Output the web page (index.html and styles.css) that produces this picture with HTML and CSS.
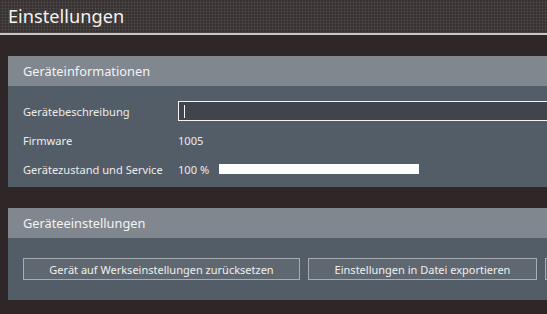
FILE: index.html
```html
<!DOCTYPE html>
<html lang="de">
<head>
    <meta charset="UTF-8">
    <title>Einstellungen</title>
    <link rel="stylesheet" href="styles.css">
</head>
<body>

    <div class="topbar">
        <h1 class="topbar-title">Einstellungen</h1>
    </div>

    <div class="content">
        <div class="panel">
            <div class="panel-header">Geräteinformationen</div>
            <div class="panel-body info-grid">
                <div class="info-label">Gerätebeschreibung</div>
                <div class="info-value"><div class="text-input"><span class="caret"></span></div></div>
                <div class="info-label">Firmware</div>
                <div class="info-value">1005</div>
                <div class="info-label">Gerätezustand und Service</div>
                <div class="info-value">
                    <span class="percent">100 %</span>
                    <div class="progress"><div class="progress-fill" style="width: 100%"></div></div>
                </div>
            </div>
        </div>

        <div class="panel">
            <div class="panel-header">Geräteeinstellungen</div>
            <div class="panel-body button-row">
                <button class="btn btn-reset">Gerät auf Werkseinstellungen zurücksetzen</button>
                <button class="btn btn-export">Einstellungen in Datei exportieren</button>
                <button class="btn btn-import">Einstellungen aus Datei importieren</button>
            </div>
        </div>
    </div>

</body>
</html>
```

FILE: styles.css
```css
body {
    margin: 0;
    padding: 0;
    background-color: #2f2727;
    font-family: "Noto Sans", "Open Sans", sans-serif;
    color: #ececec;
    overflow: hidden;
    width: 547px;
    height: 314px;
}
.topbar {
    height: 33px;
    border-bottom: 2px solid #c8c8c8;
    background-color: #383131;
    background-image: radial-gradient(#4f4949 0.9px, transparent 1.1px);
    background-size: 3px 3px;
    background-position: 1px 1px;
}
.topbar-title {
    margin: 0;
    padding-left: 8px;
    font-size: 18.2px;
    font-weight: normal;
    line-height: 33px;
    color: #f2f2f2;
}
.content {
    padding: 21px 0 0 8px;
    display: flex;
    flex-direction: column;
    gap: 21px;
}
.panel {
    width: 560px;
}
.panel-header {
    height: 30px;
    line-height: 30px;
    padding-left: 15px;
    background-color: #80878e;
    font-size: 12.8px;
    color: #f4f4f4;
}
.panel-body {
    background-color: #535d67;
}
/* Geräteinformationen */
.info-grid {
    display: grid;
    grid-template-columns: 155px 1fr;
    grid-auto-rows: 20px;
    row-gap: 9px;
    padding: 15px 0 8px 15px;
    font-size: 11.1px;
}
.info-label,
.info-value {
    display: flex;
    align-items: center;
}
.text-input {
    width: 100%;
    height: 18px;
    border: 1px solid #f4f4f4;
    background-color: #41454b;
    display: flex;
    align-items: center;
    padding-left: 5px;
}
.caret {
    width: 1px;
    height: 13px;
    background-color: #f4f4f4;
}
.percent {
    width: 41px;
}
.progress {
    width: 200px;
    height: 10px;
}
.progress-fill {
    height: 100%;
    background-color: #ffffff;
}
/* Geräteeinstellungen */
.button-row {
    display: flex;
    gap: 8px;
    padding: 20px 0 20px 15px;
}
.btn {
    flex: none;
    height: 22px;
    padding: 0;
    border: 1px solid #a7acb1;
    background-color: #5f6871;
    color: #f0f0f0;
    font-family: inherit;
    font-size: 11px;
}
.btn-reset {
    width: 277px;
}
.btn-export {
    width: 229px;
}
.btn-import {
    width: 240px;
}
```
